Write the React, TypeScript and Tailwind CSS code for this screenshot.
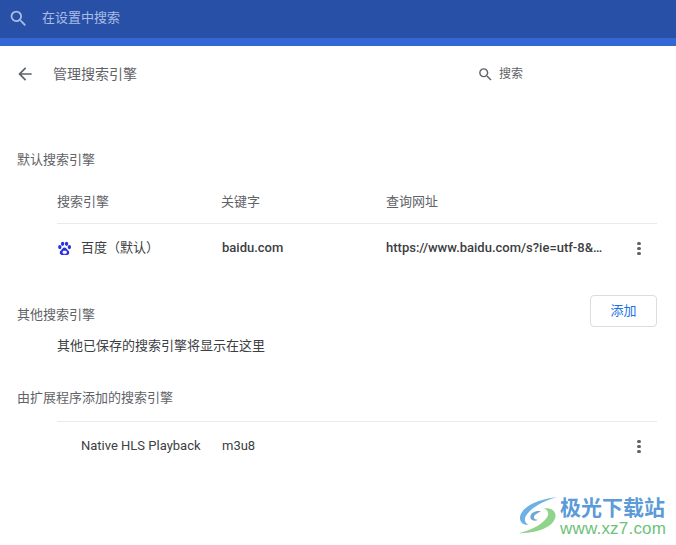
import React from 'react';

const font = { fontFamily: 'Roboto, "Noto Sans CJK SC", sans-serif' };

function SearchIcon({ className }: { className: string }) {
  return (
    <svg viewBox="0 0 24 24" className={className} fill="currentColor">
      <path d="M15.5 14h-.79l-.28-.27A6.471 6.471 0 0 0 16 9.5 6.5 6.5 0 1 0 9.5 16c1.61 0 3.09-.59 4.23-1.57l.27.28v.79l5 4.99L20.49 19l-4.99-5zm-6 0C7.01 14 5 11.99 5 9.5S7.01 5 9.5 5 14 7.01 14 9.5 11.99 14 9.5 14z" />
    </svg>
  );
}

function MoreIcon() {
  return (
    <div className="flex w-[4px] flex-col gap-[2px]">
      <span className="h-[3px] w-[4px] rounded-full bg-[#5f6368]" />
      <span className="h-[3px] w-[4px] rounded-full bg-[#5f6368]" />
      <span className="h-[3px] w-[4px] rounded-full bg-[#5f6368]" />
    </div>
  );
}

function PawIcon() {
  return (
    <svg viewBox="0 0 16 16" className="h-[15px] w-[15px]" fill="#2932e1">
      <ellipse cx="3" cy="6.5" rx="1.8" ry="2.2" />
      <ellipse cx="6" cy="3" rx="1.8" ry="2.3" />
      <ellipse cx="10.2" cy="3" rx="1.8" ry="2.3" />
      <ellipse cx="13.2" cy="6.5" rx="1.8" ry="2.2" />
      <path d="M8 7c-1.8 0-2.4 1.7-3.6 2.8C3 11 2.6 12.2 3.2 13.5 3.9 15 5.6 15.2 8 14.7c2.4.5 4.1.3 4.8-1.2.6-1.3.2-2.5-1.2-3.7C10.4 8.7 9.8 7 8 7z" />
      <rect x="6" y="10.5" width="4.4" height="3" rx="1" fill="#fff" />
    </svg>
  );
}

function Watermark() {
  return (
    <div className="absolute bottom-[8px] left-[516px] flex items-center">
      <svg viewBox="0 0 44 44" className="h-[42px] w-[44px]" fill="none">
        <path d="M42 2C28 4 10 8 4 20c-3 7 2 12 8 11-4-2-5-6-2-10C15 13 28 6 42 2z" fill="#6fb1e6" />
        <path d="M2 40c14 0 34-4 38-16 2-7-4-11-12-10 5 2 6 6 3 10-6 8-18 13-29 16z" fill="#8fd48a" />
        <path d="M25 17c-6-1-11 2-11 6s5 5 8 3c-3 0-5-1-4-4 1-2 4-3 7-5z" fill="#6fa8d8" />
      </svg>
      <div className="flex flex-col items-start">
        <span className="text-[21px] leading-[24px] font-bold text-[#5b9bd8]">极光下载站</span>
        <span className="text-[17px] leading-[17px] font-medium tracking-[0.2px] text-[#6cc27a]" style={{ fontFamily: '"Liberation Sans", sans-serif' }}>www.xz7.com</span>
      </div>
    </div>
  );
}

export default function App() {
  return (
    <div className="relative h-[545px] w-[676px] overflow-hidden bg-white text-[13px] text-[#3c4043]" style={font}>
      {/* Toolbar */}
      <div className="flex h-[38px] items-center bg-[#2850a7] pb-[2px] pl-[8px]">
        <SearchIcon className="h-[21px] w-[21px] text-[#a9bde6]" />
        <span className="ml-[13px] text-[13px] text-[#a9bde6]">在设置中搜索</span>
      </div>
      <div className="h-[8px] bg-[#3367d6]" />

      {/* Sub page header */}
      <div className="flex h-[56px] items-center pl-[15px]">
        <svg viewBox="0 0 24 24" className="h-[20px] w-[20px] text-[#5f6368]" fill="currentColor">
          <path d="M20 11H7.83l5.59-5.59L12 4l-8 8 8 8 1.41-1.41L7.83 13H20v-2z" />
        </svg>
        <span className="ml-[18px] w-[424px] text-[14px] text-[#5f6368]">管理搜索引擎</span>
        <SearchIcon className="h-[17px] w-[17px] text-[#5f6368]" />
        <span className="ml-[5px] text-[12px] text-[#5f6368]">搜索</span>
      </div>

      {/* Default engines */}
      <div className="mt-[48px] pl-[17px] leading-[20px] text-[#5f6368]">默认搜索引擎</div>
      <div className="mt-[10px] ml-[57px] mr-[19px]">
        <div className="flex h-[44px] items-center border-b border-[#e8eaed] text-[#5f6368]">
          <span className="w-[164px]">搜索引擎</span>
          <span className="w-[165px]">关键字</span>
          <span>查询网址</span>
        </div>
        <div className="flex h-[48px] items-center">
          <span className="flex w-[165px] items-center">
            <PawIcon />
            <span className="ml-[9px]">百度（默认）</span>
          </span>
          <span className="w-[164px] font-medium">baidu.com</span>
          <span className="w-[217px] truncate font-medium">https://www.baidu.com/s?ie=utf-8&amp;...</span>
          <span className="ml-[34px]"><MoreIcon /></span>
        </div>
      </div>

      {/* Other engines */}
      <div className="mt-[23px] flex items-start justify-between pr-[19px] pl-[17px]">
        <span className="mt-[10px] leading-[20px] text-[#5f6368]">其他搜索引擎</span>
        <button className="h-[32px] w-[67px] rounded-[4px] border border-[#dadce0] text-[13px] text-[#1a73e8]">添加</button>
      </div>
      <div className="mt-[9px] pl-[57px] leading-[20px]">其他已保存的搜索引擎将显示在这里</div>

      {/* Extension engines */}
      <div className="mt-[32px] pl-[17px] leading-[20px] text-[#5f6368]">由扩展程序添加的搜索引擎</div>
      <div className="mt-[13px] ml-[57px] mr-[19px] flex h-[49px] items-center border-t border-[#e8eaed]">
        <span className="w-[165px] pl-[24px]">Native HLS Playback</span>
        <span className="w-[415px]">m3u8</span>
        <MoreIcon />
      </div>

      <Watermark />
    </div>
  );
}
